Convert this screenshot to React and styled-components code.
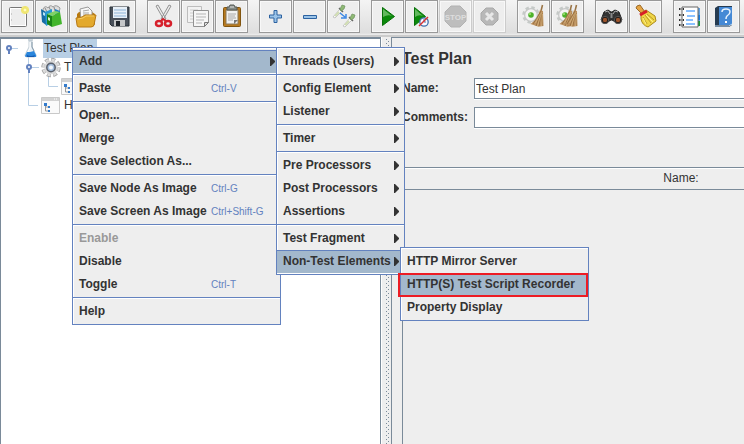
import React from "react";
import styled, { createGlobalStyle, css } from "styled-components";

const line = "#7a8a99";
const blue = "#6382bf";
const panel = "#eeeeee";
const ink = "#333333";

const GlobalStyle = createGlobalStyle`
  *, *::before, *::after { box-sizing: border-box; }
  body {
    margin: 0;
    overflow: hidden;
    background: ${panel};
    color: ${ink};
    font: 12px/19px "Liberation Sans", Arial, sans-serif;
  }
  button, input { font: inherit; color: inherit; }
`;

const Window = styled.div`
  position: relative;
  display: flex;
  flex-direction: column;
  min-height: 100vh;
`;

const Toolbar = styled.div`
  display: flex;
  flex: none;
  gap: 11px;
  height: 37px;
  padding-left: 1px;
  overflow: hidden;
  background: linear-gradient(#f4f4f4, #dedede 33px, #eeeeee 35px);
  border-bottom: 2px solid #cccccc;
`;

const ToolGroup = styled.div`
  display: flex;
  flex: none;
  gap: 1px;
`;

const ToolButton = styled.button`
  width: 33px;
  height: 33px;
  padding: 0;
  background: ${panel};
  border: 1px solid #999999;
  box-shadow: inset 0 0 0 1px #f8f8f8;
  ${(p) => p.disabled && css`border-color: #cccccc;`}
`;

const Glyph = styled.svg`
  display: block;
  flex: none;
  overflow: visible;
`;

const Split = styled.div`
  display: flex;
  flex: 1;
`;

const TreePane = styled.div`
  flex: 0 0 381px;
  background: #ffffff;
  border: 1px solid ${line};
  border-top-width: 2px;
  border-bottom: 0;
`;

const TreeRow = styled.div`
  display: flex;
  gap: 2px;
  height: 19px;
`;

const TreeMarks = styled.div`
  display: flex;
`;

const TreeLabel = styled.span`
  padding: 0 4px 0 1px;
  white-space: nowrap;
  background: ${(p) => (p.$selected ? "#b8cfe5" : "transparent")};
`;

const Divider = styled.div`
  flex: 0 0 10px;
  padding: 2px 1px 0 4px;
  border-left: 1px solid #ffffff;
`;

const Grip = styled.div`
  width: 4px;
  height: 100%;
  background-image:
    conic-gradient(from 0deg at 1px 1px, transparent 75%, ${line} 0),
    conic-gradient(from 0deg at 1px 1px, transparent 75%, ${line} 0);
  background-size: 4px 4px;
  background-position: 0 0, 2px 2px;
`;

const Editor = styled.main`
  display: flex;
  flex: 1;
  flex-direction: column;
  min-width: 0;
  padding: 11px 0 0 10px;
  border-top: 1px solid ${line};
  border-left: 1px solid ${line};
`;

const Title = styled.h1`
  margin: 0 0 9px;
  font-size: 16px;
  line-height: 20px;
`;

const Fields = styled.div`
  display: grid;
  grid-template-columns: 72px 1fr;
  row-gap: 8px;
`;

const FieldLabel = styled.label`
  font-weight: bold;
  line-height: 21px;
`;

const FieldInput = styled.input`
  width: 100%;
  height: 21px;
  padding: 0 1px;
  background: #ffffff;
  border: 1px solid ${line};
  border-right: 0;
  border-radius: 0;
  outline: 0;
  box-shadow: 0 1px #ffffff;
`;

const TableFrame = styled.div`
  flex: 1;
  margin-top: 39px;
  overflow: hidden;
  border-top: 1px solid ${line};
  border-left: 1px solid ${line};
`;

const Variables = styled.table`
  border-spacing: 0;
`;

const NameHeading = styled.th`
  min-width: 556px;
  height: 22px;
  padding: 0;
  font-weight: normal;
  border-bottom: 1px solid ${line};
  box-shadow: inset 0 1px #ffffff;
`;

const Menu = styled.div`
  position: absolute;
  top: ${(p) => p.$top}px;
  left: ${(p) => p.$left}px;
  z-index: 1;
  width: ${(p) => p.$width}px;
  padding: 2px 0 1px;
  background: ${panel};
  border: 1px solid ${blue};
  box-shadow: inset 1px 1px #ffffff;
`;

const MenuEntry = styled.div`
  position: relative;
`;

const MenuItem = styled.button`
  display: grid;
  grid-template-columns: ${(p) => (p.$keys ? "132px 1fr auto" : "1fr auto")};
  align-items: center;
  width: 100%;
  height: 23px;
  padding: 0 5px 0 6px;
  text-align: left;
  white-space: nowrap;
  font-weight: bold;
  background: transparent;
  border: 0;
  ${(p) => p.disabled && css`color: #999999;`}
  ${(p) => p.$active && css`
    background: #a3b8cc;
    box-shadow: inset 0 1px ${blue}, 0 1px #ffffff;
  `}
`;

const Shortcut = styled.kbd`
  color: ${blue};
  font: 10px/19px "Liberation Sans", Arial, sans-serif;
`;

const Separator = styled.hr`
  height: 2px;
  margin: 1px 0;
  border: 0;
  border-top: 1px solid ${blue};
  border-bottom: 1px solid #ffffff;
`;

const Highlight = styled.span`
  position: absolute;
  inset: 0 0 -1px -3px;
  border: 2px solid #ed1c24;
  pointer-events: none;
`;

const Gear = () => (
  <>
    <circle cx="14" cy="15" r="6" fill="#f3f3f3" stroke="#c7c7c7" strokeWidth="2" />
    <circle cx="14" cy="15" r="7.5" fill="none" stroke="#c5c9c7" strokeWidth="2.5" strokeDasharray="3.4 2.5" />
    <circle cx="14" cy="15" r="5.7" fill="#f4f4f4" />
    <circle cx="14" cy="15" r="2.8" fill="#4eb22b" />
    <circle cx="13" cy="14" r="1" fill="#a4e67a" />
  </>
);

const Twigs = ({ dx = 0 }) => (
  <g transform={`translate(${dx} 0)`}>
    <path d="M25.5 5 24 11" stroke="#997344" strokeWidth="1.5" />
    <path d="m23 10 3 1 .5 15-5 .8-8-2.8 6-5z" fill="#bd9260" />
    <path d="m24 11-8 13m8-12-5 14m5-13-2 13m3-13v13" stroke="#8b6335" strokeWidth=".7" />
    <path d="m24.5 12-6 11m6-10-4 13m5-12-1 12" stroke="#dfbd87" strokeWidth=".6" />
  </g>
);

const icons = {
  new: (
    <>
      <rect x="8.5" y="7.5" width="17" height="19" rx="1" fill="#ededed" stroke="#777" />
      <rect x="9.5" y="8.5" width="15" height="17" fill="none" stroke="#fff" />
      <path d="M10 14h1m-1 6h1" stroke="#aaa" />
      <circle cx="24" cy="10" r="4" fill="#f0e778" />
      <path d="m24 6.5.9 2.6 2.6.9-2.6.9-.9 2.6-.9-2.6-2.6-.9 2.6-.9z" fill="#fffcc2" stroke="#e9db46" strokeWidth=".5" />
    </>
  ),
  templates: (
    <>
      <path d="M8 9q2-4 5-1 2-4 5-1 3-3 7 1l-1 5H8z" fill="#dedede" stroke="#999" />
      <path d="m10 8 2 4m2-5 2 4m3-4 1 4" stroke="#888" />
      <path d="m6 9 5 3v13l-4-3z" fill="#176da6" />
      <path d="m10 12 7-3v14l-6 3z" fill="#2799d4" />
      <path d="m8 12 2 1v3l-2-1z" fill="#b9e4f6" />
      <path d="m20 9 5 2v3l-5 2z" fill="#2381c4" />
      <path d="m12 14 5 2v11l-5-3z" fill="#198418" />
      <path d="m12 14 8-3 5 1-8 4z" fill="#7fd267" />
      <path d="m17 16 8-4 2 12-10 3z" fill="#42b52c" />
      <path d="m13 17 2 1v3l-2-1z" fill="#d8f0cb" />
    </>
  ),
  open: (
    <>
      <path d="M8 14v11l2 2h14l2-3V14l-3-2H10z" fill="#b8790f" />
      <path d="m11 9 8-2 4 4v10H12z" fill="#f8f8f8" stroke="#999" />
      <path d="m14 11 6-1m-6 3h6m-6 2h6" stroke="#a5a5a5" />
      <path d="m7 18 6-1 3-2h11l-2 10q-1 2-3 2H10q-2 0-2-2z" fill="#e3a92d" stroke="#b77a18" />
      <path d="m9 19 5-1 3-2h8" stroke="#f5cc65" fill="none" />
    </>
  ),
  save: (
    <>
      <path d="M7 7h19v19H9l-2-2z" fill="#49505a" stroke="#293039" />
      <path d="M10 7h14v11H10z" fill="#e8f0f8" />
      <path d="M11 10h12m-12 3h12m-12 3h12" stroke="#8eb3d6" />
      <path d="M11 20h11v6H11z" fill="#c5c7c9" />
      <path d="M13 21h4v5h-4z" fill="#20252c" />
    </>
  ),
  cut: (
    <>
      <path d="m9 6 2-1 8 14-2 1zM24 6l-2-1-8 14 2 1z" fill="#ececec" stroke="#929292" />
      <ellipse cx="12" cy="23.500" rx="3" ry="2.500" stroke="#d6202b" strokeWidth="2.500" />
      <ellipse cx="21" cy="23.500" rx="3" ry="2.500" stroke="#d6202b" strokeWidth="2.500" />
      <path d="m14 21 2-2 3 2" stroke="#d6202b" strokeWidth="2" />
    </>
  ),
  copy: (
    <>
      <path d="M6.500 6.500h14v16h-14z" fill="#f2f2f2" stroke="#bdbdbd" />
      <path d="M9 10h8m-8 3h5m-5 3h5m-5 3h5" stroke="#ccc" />
      <path d="M12.500 10.500h15v12l-4 4h-11z" fill="#f6f6f6" stroke="#929292" />
      <path d="M15 14h10m-10 3h10m-10 3h8m-8 3h6" stroke="#b5b5b5" />
      <path d="M23.500 26.500v-4h4z" fill="#ddd" stroke="#777" />
    </>
  ),
  paste: (
    <>
      <rect x="8.500" y="7.500" width="17" height="19" rx="1" fill="#b8791d" stroke="#815510" />
      <path d="M11 10h12v14H11z" fill="#f1f1f1" stroke="#897858" />
      <path d="M13 14h8m-8 2h7m-7 2h8m-8 2h5" stroke="#aaa" />
      <path d="m19 24 4-4h-4z" fill="#777" />
      <path d="M12 10V7h2l1-2h4l1 2h2v3z" fill="#858c87" stroke="#565b57" />
      <path d="M15 7h4" stroke="#ddd" />
    </>
  ),
  plus: (
    <path d="M15 10.500h3V15h4.500v3H18v4.500h-3V18h-4.500v-3H15z" fill="#9ac3e8" stroke="#2c62a0" />
  ),
  minus: <path d="M10.500 15.500h13v3h-13z" fill="#9ac3e8" stroke="#2c62a0" />,
  toggle: (
    <>
      {[[0, 0], [10, 9]].map(([x, y]) => (
        <g key={x} transform={`translate(${x} ${y})`}>
          <path d="m6 17 7-8 2 2-7 7z" fill="#fafafa" stroke="#c6c6c6" />
          <path d="m8 16 4-4" stroke="#d0ddb1" strokeWidth="2" />
          <path d="m12 8 4 4" stroke="#666" strokeWidth="1.500" />
          <path d="m13 9 2-4 3 1-1 3-3 2z" fill="#8fba74" stroke="#6d9160" strokeWidth=".7" />
        </g>
      ))}
      <path d="m13 13 5 4m1-3v4h-5" fill="none" stroke="#3d88e5" strokeWidth="1.500" />
    </>
  ),
  play: (
    <>
      <path d="m11.500 7.500 12 9-12 9z" fill="#0b8a0b" stroke="#087008" />
      <path d="m12 9 9 7q-4-2-9 1z" fill="#63b95e" />
    </>
  ),
  playNoTimers: (
    <>
      <path d="m9.500 7.500 11 9-11 9z" fill="#0b8a0b" stroke="#087008" />
      <path d="m10 9 8 7q-4-2-8 1z" fill="#63b95e" />
      <circle cx="19" cy="22" r="4.200" fill="#f8f8ff" stroke="#3f6fab" strokeWidth="1.300" />
      <path d="M19 19v3h2" fill="none" stroke="#537da9" />
      <path d="m14 26 9-9" stroke="#d83131" strokeWidth="1.500" />
    </>
  ),
  stop: (
    <>
      <path d="M12 6h9l6 6v9l-6 6h-9l-6-6v-9z" fill="#bdbdbd" stroke="#b2b2b2" />
      <text x="16.500" y="20" textAnchor="middle" fontFamily="Liberation Sans" fontWeight="bold" fontSize="8" fill="#dddddd">STOP</text>
    </>
  ),
  shutdown: (
    <>
      <path d="M13 8h7l5 5v7l-5 5h-7l-5-5v-7z" fill="#b8b8b8" stroke="#a9a9a9" />
      <path d="m13 13 7 7m0-7-7 7" stroke="#e8e8e8" strokeWidth="3" />
    </>
  ),
  clear: <><Gear /><Twigs /></>,
  clearAll: <><Gear /><Twigs dx={-5} /><Twigs /></>,
  search: (
    <>
      <path d="m9 12 4-2 3 2h1l3-2 4 2 3 8-5 3-5-3h-1l-5 3-5-3z" fill="#333" stroke="#202020" />
      <path d="m10 12 3-1 2 3m8-2-3-1-2 3" stroke="#aaa" fill="none" />
      <circle cx="10" cy="20" r="3.700" fill="#201b19" stroke="#555" />
      <circle cx="23" cy="20" r="3.700" fill="#201b19" stroke="#555" />
      <circle cx="10" cy="20" r="2.200" fill="#9c542c" />
      <circle cx="23" cy="20" r="2.200" fill="#9c542c" />
      <path d="M16.500 13v5" stroke="#888" strokeWidth="2" />
    </>
  ),
  reset: (
    <>
      <path d="m8 6 3-1 5 7-3 2-6-6z" fill="#e5a544" stroke="#9c6a26" />
      <path d="m12 13 5-3 9 6 1 5-8 6q-6-2-7-8z" fill="#efd647" stroke="#ac8a1c" />
      <path d="m11 15 7-4" stroke="#d81e27" strokeWidth="3" />
      <path d="m14 17 4 7m-2-9 6 8m-4-9 7 6" stroke="#ba9a27" />
      <path d="m14 18 3 6m0-9 7 7" stroke="#fff08a" />
    </>
  ),
  functions: (
    <>
      <path d="M24 8h3v18h-3z" fill="#64a2df" />
      <path d="M25 15h2v5h-2z" fill="#167ee6" />
      <path d="M25 21h2v5h-2z" fill="#159a3c" />
      <path d="M9 7h16v20H9z" fill="#fff" stroke="#666" />
      <path d="M13 11h9m-8 5h8m-9 4h7m-7 4h9" stroke="#1682ff" />
      {[9, 15, 20, 25].map((y) => (
        <g key={y}>
          <path d={`M6 ${y}h5`} stroke="#333" strokeWidth="2" />
          <path d={`M7 ${y}h3`} stroke="#eee" />
        </g>
      ))}
    </>
  ),
  help: (
    <>
      <path d="m8 8 3-2h14v19l-3 2H8z" fill="#263b51" />
      <path d="M12 7h13v18H12z" fill="#4589d5" />
      <path d="M8 26h14l3-2" fill="none" stroke="#c8e0f5" />
      <path d="M15 12q0-3 4-3t4 3q0 2-3 4-1 1-1 3" fill="none" stroke="#e9f4ff" strokeWidth="1.500" />
      <path d="M18 21h2v2h-2z" fill="#fff" />
    </>
  ),
};

const toolGroups = [
  [["new", "New"], ["templates", "Templates"], ["open", "Open"], ["save", "Save"]],
  [["cut", "Cut"], ["copy", "Copy"], ["paste", "Paste"]],
  [["plus", "Expand All"], ["minus", "Collapse All"], ["toggle", "Toggle"]],
  [["play", "Start"], ["playNoTimers", "Start no pauses"], ["stop", "Stop", true], ["shutdown", "Shutdown", true]],
  [["clear", "Clear"], ["clearAll", "Clear All"]],
  [["search", "Search"], ["reset", "Reset Search"]],
  [["functions", "Function Helper"], ["help", "Help"]],
];

const Flask = () => (
  <Glyph width="20" height="19" viewBox="0 0 20 19">
    <path d="M8 2v6L4 16q0 2 2 2h7q2 0 2-2L11 8V2z" fill="#e7eff5" stroke="#c3ced6" />
    <path d="m6 13-2 4q0 1 2 1h8q2 0 1-2l-2-4-4 1z" fill="#2b86dc" />
    <path d="M6 16q4 2 8 0l-1 2H6z" fill="#155ab0" />
    <path d="M7 1h5" stroke="#9eb0bc" />
    <path d="M9 3v6l-2 4" fill="none" stroke="#fff" />
    <path d="M11 3v5l2 4" fill="none" stroke="#8398a8" />
  </Glyph>
);

const Cog = () => (
  <Glyph width="20" height="19" viewBox="0 0 20 19">
    <circle cx="10" cy="9.500" r="8" fill="none" stroke="#a3a3a3" strokeWidth="3.500" strokeDasharray="4 2.283" />
    <circle cx="10" cy="9.500" r="7.800" fill="none" stroke="#dedede" strokeWidth="2.200" strokeDasharray="3 3.126" strokeDashoffset="-.5" />
    <circle cx="10" cy="9.500" r="6.800" fill="#d9d9d9" />
    <circle cx="10" cy="9.500" r="4.200" fill="#a5bfde" stroke="#59606c" strokeWidth="1.500" />
    <circle cx="10" cy="9.500" r="2" fill="#f2f7fc" />
  </Glyph>
);

const Form = () => (
  <Glyph width="20" height="19" viewBox="0 0 20 19">
    <path d="M.5 1.500h18v16H.5z" fill="#fafafa" stroke="#c9c9c9" />
    <path d="M1 2h17v3H1z" fill="#d2d2d2" />
    <path d="M13 3h1m1 0h1" stroke="#fff" />
    <path d="M4.500 8v7H7m-2-4h2" fill="none" stroke="#999" />
    <path d="M3 7h3v3H3zm4 3h2v2H7zm0 4h2v2H7z" fill="#347ccc" />
  </Glyph>
);

const guides = {
  root: (
    <>
      <path d="M10 9.500h7" stroke="#b8cfe5" />
      <path d="M8 11v4" stroke={blue} strokeWidth="2" />
      <circle cx="8" cy="9" r="2" fill="#fff" stroke={blue} strokeWidth="2" />
    </>
  ),
  group: (
    <>
      <path d="M27.500-1v20M30 9.500h8" stroke="#b8cfe5" />
      <path d="M28 11v4" stroke={blue} strokeWidth="2" />
      <circle cx="28" cy="9" r="2" fill="#fff" stroke={blue} strokeWidth="2" />
    </>
  ),
  nested: <path d="M27.500 0v19M47.500 0v9.500H57" fill="none" stroke="#b8cfe5" />,
  leaf: <path d="M27.500 0v9.500H37" fill="none" stroke="#b8cfe5" />,
};

const treeRows = [
  { guide: "root", width: 20, Icon: Flask, label: "Test Plan", selected: true },
  { guide: "group", width: 40, Icon: Cog, label: "T" },
  { guide: "nested", width: 60, Icon: Form },
  { guide: "leaf", width: 40, Icon: Form, label: "H" },
];

const elementMenu = [
  { label: "HTTP Mirror Server" },
  { label: "HTTP(S) Test Script Recorder", active: true, marked: true },
  { label: "Property Display" },
];

const addMenu = [
  { label: "Threads (Users)", arrow: true },
  null,
  { label: "Config Element", arrow: true },
  { label: "Listener", arrow: true },
  null,
  { label: "Timer", arrow: true },
  null,
  { label: "Pre Processors", arrow: true },
  { label: "Post Processors", arrow: true },
  { label: "Assertions", arrow: true },
  null,
  { label: "Test Fragment", arrow: true },
  { label: "Non-Test Elements", arrow: true, active: true, submenu: { items: elementMenu, left: 123, width: 189 } },
];

const contextMenu = [
  { label: "Add", arrow: true, active: true, submenu: { items: addMenu, left: 203, width: 129 } },
  null,
  { label: "Paste", keys: "Ctrl-V" },
  null,
  { label: "Open..." },
  { label: "Merge" },
  { label: "Save Selection As..." },
  null,
  { label: "Save Node As Image", keys: "Ctrl-G" },
  { label: "Save Screen As Image", keys: "Ctrl+Shift-G" },
  null,
  { label: "Enable", disabled: true },
  { label: "Disable" },
  { label: "Toggle", keys: "Ctrl-T" },
  null,
  { label: "Help" },
];

function PopupMenu({ items, top, left, width }) {
  return (
    <Menu role="menu" $top={top} $left={left} $width={width}>
      {items.map((item, i) =>
        item ? (
          <MenuEntry key={item.label}>
            <MenuItem role="menuitem" disabled={item.disabled} $active={item.active} $keys={Boolean(item.keys)}>
              <span>{item.label}</span>
              {item.keys && <Shortcut>{item.keys}</Shortcut>}
              {item.arrow && (
                <Glyph width="5" height="9" viewBox="0 0 5 9" aria-hidden="true">
                  <path d="M0 0h1l4 4v1L1 9H0z" fill={ink} />
                </Glyph>
              )}
            </MenuItem>
            {item.marked && <Highlight />}
            {item.submenu && <PopupMenu {...item.submenu} top={-3} />}
          </MenuEntry>
        ) : (
          <Separator key={i} />
        )
      )}
    </Menu>
  );
}

export default function App() {
  return (
    <Window>
      <GlobalStyle />
      <Toolbar role="toolbar">
        {toolGroups.map((group) => (
          <ToolGroup key={group[0][0]}>
            {group.map(([name, label, disabled]) => (
              <ToolButton key={name} aria-label={label} disabled={disabled}>
                <Glyph width="31" height="31" viewBox="1 1 31 31" fill="none" aria-hidden="true">
                  {icons[name]}
                </Glyph>
              </ToolButton>
            ))}
          </ToolGroup>
        ))}
      </Toolbar>
      <Split>
        <TreePane role="tree">
          {treeRows.map(({ guide, width, Icon, label, selected }) => (
            <TreeRow key={guide} role="treeitem" aria-selected={Boolean(selected)}>
              <TreeMarks>
                <Glyph width={width} height="19" viewBox={`0 0 ${width} 19`} aria-hidden="true">
                  {guides[guide]}
                </Glyph>
                <Icon />
              </TreeMarks>
              {label && <TreeLabel $selected={selected}>{label}</TreeLabel>}
            </TreeRow>
          ))}
        </TreePane>
        <Divider>
          <Grip />
        </Divider>
        <Editor>
          <Title>Test Plan</Title>
          <Fields>
            <FieldLabel htmlFor="plan-name">Name:</FieldLabel>
            <FieldInput id="plan-name" defaultValue="Test Plan" />
            <FieldLabel htmlFor="plan-comments">Comments:</FieldLabel>
            <FieldInput id="plan-comments" />
          </Fields>
          <TableFrame>
            <Variables>
              <thead>
                <tr>
                  <NameHeading scope="col">Name:</NameHeading>
                </tr>
              </thead>
            </Variables>
          </TableFrame>
        </Editor>
      </Split>
      <PopupMenu items={contextMenu} top={47} left={72} width={209} />
    </Window>
  );
}
